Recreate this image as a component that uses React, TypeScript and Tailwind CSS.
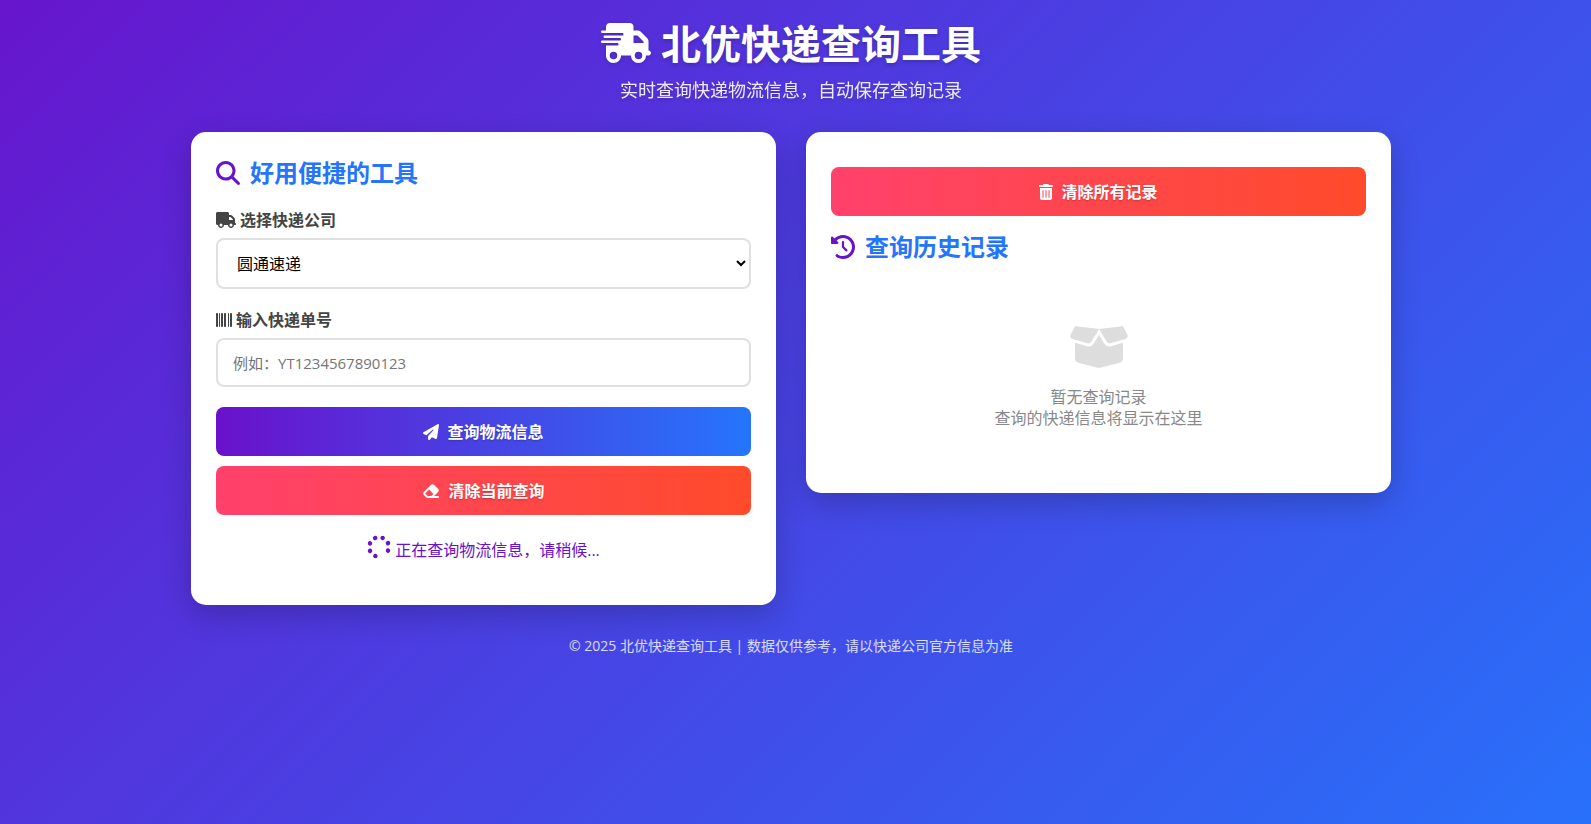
import React from "react";
import {
  FaBarcode,
  FaBoxOpen,
  FaClockRotateLeft,
  FaEraser,
  FaMagnifyingGlass,
  FaPaperPlane,
  FaSpinner,
  FaTrashCan,
  FaTruck,
  FaTruckFast,
} from "react-icons/fa6";

const companies = [
  { value: "yuantong", label: "圆通速递" },
  { value: "zhongtong", label: "中通快递" },
  { value: "shentong", label: "申通快递" },
  { value: "yunda", label: "韵达快递" },
  { value: "shunfeng", label: "顺丰速运" },
];

const buttonBase =
  "flex w-full h-[49px] items-center justify-center gap-2 rounded-lg text-base font-bold text-white text-shadow-sm cursor-pointer";

const SearchCard: React.FC = () => {
  const [company, setCompany] = React.useState("yuantong");
  const [trackingNo, setTrackingNo] = React.useState("");

  return (
    <section className="flex-1 rounded-[15px] bg-white px-[25px] pt-[25px] pb-11 shadow-[0_10px_30px_rgba(0,0,0,0.2)]">
      <h2 className="flex h-8 items-center gap-[10px] text-2xl font-bold text-[#2575fc]">
        <FaMagnifyingGlass className="text-[#6a11cb]" />
        好用便捷的工具
      </h2>
      <label
        htmlFor="company"
        className="mt-5 flex h-[21px] items-center gap-1 font-semibold text-[#444]"
      >
        <FaTruck className="h-4 w-5" />
        选择快递公司
      </label>
      <select
        id="company"
        className="mt-2 block h-[51px] w-full rounded-lg border-2 border-[#e0e0e0] bg-white px-[15px] text-base text-black"
        value={company}
        onChange={(e) => setCompany(e.target.value)}
      >
        {companies.map((item) => (
          <option key={item.value} value={item.value}>
            {item.label}
          </option>
        ))}
      </select>
      <label
        htmlFor="trackingNo"
        className="mt-5 flex h-[21px] items-center gap-1 font-semibold text-[#444]"
      >
        <FaBarcode />
        输入快递单号
      </label>
      <input
        id="trackingNo"
        type="text"
        className="mt-2 block h-[49px] w-full rounded-lg border-2 border-[#e0e0e0] px-[15px] text-[15px] placeholder:text-[#757575]"
        placeholder="例如：YT1234567890123"
        value={trackingNo}
        onChange={(e) => setTrackingNo(e.target.value)}
      />
      <button
        type="button"
        className={`${buttonBase} mt-5 bg-linear-to-r/srgb from-[#6a11cb] to-[#2575fc]`}
      >
        <FaPaperPlane />
        查询物流信息
      </button>
      <button
        type="button"
        className={`${buttonBase} mt-[10px] bg-linear-to-r/srgb from-[#ff416c] to-[#ff4b2b]`}
        onClick={() => setTrackingNo("")}
      >
        <FaEraser className="h-4 w-[18px]" />
        清除当前查询
      </button>
      <p className="mt-5 flex h-[26px] items-start justify-center gap-1 text-base text-[#6a11cb]">
        <FaSpinner className="size-6 rotate-[112deg]" />
        <span className="pt-[3px]">正在查询物流信息，请稍候...</span>
      </p>
    </section>
  );
};

const HistoryCard: React.FC = () => {
  return (
    <section className="flex-1 rounded-[15px] bg-white px-[25px] pt-[35px] pb-16 shadow-[0_10px_30px_rgba(0,0,0,0.2)]">
      <button
        type="button"
        className={`${buttonBase} bg-linear-to-r/srgb from-[#ff416c] to-[#ff4b2b]`}
      >
        <FaTrashCan className="h-4 w-[14px]" />
        清除所有记录
      </button>
      <h2 className="mt-[15px] flex h-8 items-center gap-[10px] text-2xl font-bold text-[#2575fc]">
        <FaClockRotateLeft className="text-[#6a11cb]" />
        查询历史记录
      </h2>
      <div className="mt-[60px] flex flex-col items-center text-[#888]">
        <FaBoxOpen className="h-12 w-[60px] text-[#ddd]" />
        <p className="mt-4 text-center text-base leading-[21px]">
          暂无查询记录
          <br />
          查询的快递信息将显示在这里
        </p>
      </div>
    </section>
  );
};

const App: React.FC = () => {
  return (
    <div className="min-h-screen bg-[linear-gradient(135deg,#6a11cb_-5%,#2575fc_105%)] py-5 pr-[29px] pl-5 font-['Open_Sans','Noto_Sans_CJK_SC',sans-serif] leading-normal">
      <div className="mx-auto max-w-[1200px]">
        <header className="text-center text-white text-shadow-[0_2px_4px_rgba(0,0,0,0.2)]">
          <h1 className="flex h-12 items-center justify-center gap-[10px] text-[40px] font-bold">
            <FaTruckFast className="mb-[2px] h-10 w-[50px] drop-shadow-sm" />
            北优快递查询工具
          </h1>
          <p className="mt-[10px] h-6 text-lg leading-6 opacity-90">
            实时查询快递物流信息，自动保存查询记录
          </p>
        </header>
        <main className="mt-[30px] flex items-start gap-[30px]">
          <SearchCard />
          <HistoryCard />
        </main>
        <footer className="mt-[29px] text-center text-sm leading-6 text-white/80">
          © 2025 北优快递查询工具 | 数据仅供参考，请以快递公司官方信息为准
        </footer>
      </div>
    </div>
  );
};

export default App;
